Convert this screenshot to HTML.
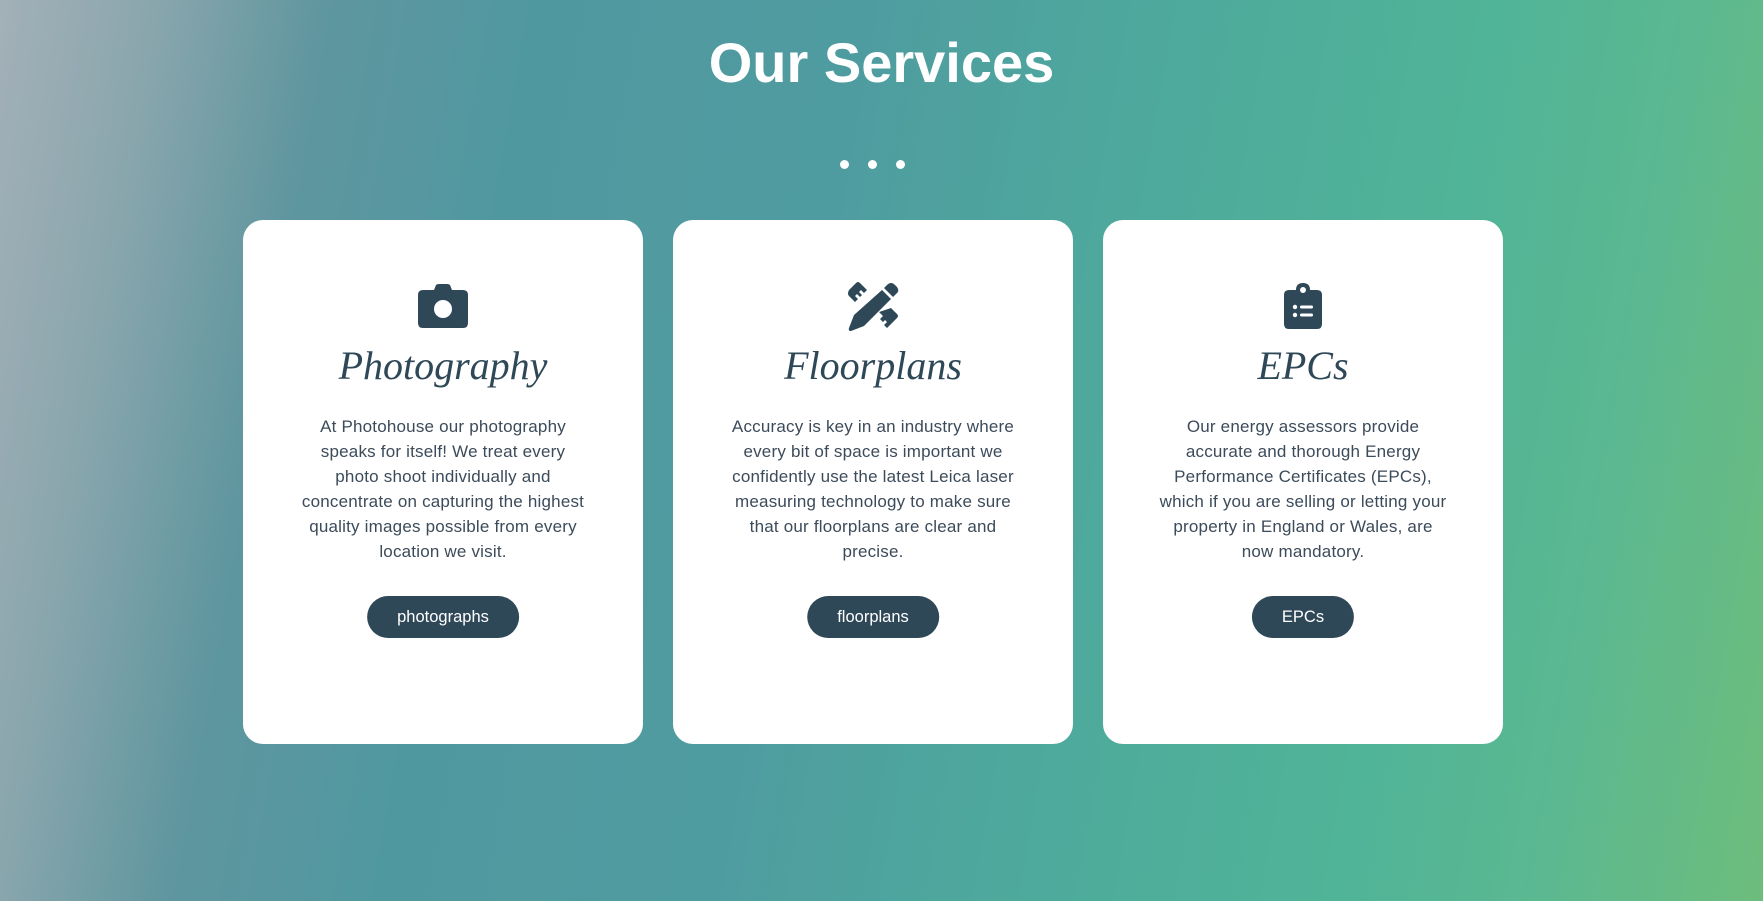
<!DOCTYPE html>
<html><head><meta charset="utf-8"><style>
html,body{margin:0;padding:0;}
body{width:1763px;height:901px;overflow:hidden;position:relative;font-family:"Liberation Sans",sans-serif;
background:linear-gradient(100deg,#a3b0b8 0%,#8aa6ad 8%,#5f969f 17%,#5098a0 28%,#4f9ca0 45%,#4eaa9c 62%,#50b498 78%,#5bb891 88%,#6dbd7c 100%);}
h1{position:absolute;top:30px;left:0;width:1763px;text-align:center;margin:0;color:#fff;font-size:56px;font-weight:bold;}
.dot{position:absolute;top:160px;width:9px;height:9px;border-radius:50%;background:#fff;}
.card{position:absolute;top:220px;width:400px;height:524px;background:#fff;border-radius:20px;text-align:center;color:#2f4858;}
.icon{position:absolute;top:60px;left:0;width:400px;height:52px;display:flex;justify-content:center;align-items:center;}
.card h2{position:absolute;top:122px;left:0;width:400px;margin:0;font-family:"Liberation Serif",serif;font-style:italic;font-weight:normal;font-size:40px;color:#2f4858;}
.card p{position:absolute;top:194px;left:0;width:400px;margin:0;font-size:17px;line-height:25px;color:#3c4b5a;white-space:nowrap;letter-spacing:0.2px;}
.btn{position:absolute;top:376px;left:50%;transform:translateX(-50%);height:42px;line-height:42px;border-radius:21px;background:#2f4858;color:#fff;font-size:16.5px;padding:0 30px;white-space:nowrap;}
</style></head><body>
<h1>Our Services</h1>
<div class="dot" style="left:840px"></div><div class="dot" style="left:868px"></div><div class="dot" style="left:896px"></div>

<div class="card" style="left:243px">
<div class="icon"><svg width="50" height="44" viewBox="0 0 50 44"><path d="M16 6 L18 1 Q19 0 21 0 H29 Q31 0 32 1 L34 6 H45 Q50 6 50 11 V39 Q50 44 45 44 H5 Q0 44 0 39 V11 Q0 6 5 6 Z" fill="#2f4858"/><circle cx="25" cy="25" r="9" fill="#fff"/></svg></div>
<h2>Photography</h2>
<p>At Photohouse our photography<br>speaks for itself! We treat every<br>photo shoot individually and<br>concentrate on capturing the highest<br>quality images possible from every<br>location we visit.</p>
<div class="btn">photographs</div>
</div>

<div class="card" style="left:673px">
<div class="icon"><svg width="52" height="50" viewBox="0 0 52 50"><g fill="#2f4858">
<path d="M2 9 L9 2 Q11 0 13 2 L20 9 L17 12 L14 9 L12 11 L15 14 L13 16 L10 13 L8 15 L11 18 L8 21 L2 15 Q0 13 2 9 Z"/>
<path d="M32 31 L36 35 L33 38 L36 41 L38 39 L40 41 L37 44 L40 47 L43 44 L50 37 Q52 35 50 33 L44 27 Z"/>
<path d="M40 4 Q44 0 48 4 L50 6 Q53 10 49 13 L46 16 L37 7 Z"/>
<path d="M35 9 L44 18 L17 45 L4 50 Q1 50 2 47 L7 34 Z"/></g></svg></div>
<h2>Floorplans</h2>
<p>Accuracy is key in an industry where<br>every bit of space is important we<br>confidently use the latest Leica laser<br>measuring technology to make sure<br>that our floorplans are clear and<br>precise.</p>
<div class="btn">floorplans</div>
</div>

<div class="card" style="left:1103px">
<div class="icon"><svg width="38" height="46" viewBox="0 0 38 46"><path d="M12 7 Q12 0 19 0 Q26 0 26 7 H33 Q38 7 38 12 V41 Q38 46 33 46 H5 Q0 46 0 41 V12 Q0 7 5 7 Z" fill="#2f4858"/><circle cx="19" cy="7" r="3" fill="#fff"/><circle cx="11" cy="24" r="2.2" fill="#fff"/><circle cx="11" cy="32" r="2.2" fill="#fff"/><rect x="16" y="22.5" width="13" height="3" rx="1.5" fill="#fff"/><rect x="16" y="30.5" width="13" height="3" rx="1.5" fill="#fff"/></svg></div>
<h2>EPCs</h2>
<p>Our energy assessors provide<br>accurate and thorough Energy<br>Performance Certificates (EPCs),<br>which if you are selling or letting your<br>property in England or Wales, are<br>now mandatory.</p>
<div class="btn">EPCs</div>
</div>
</body></html>
